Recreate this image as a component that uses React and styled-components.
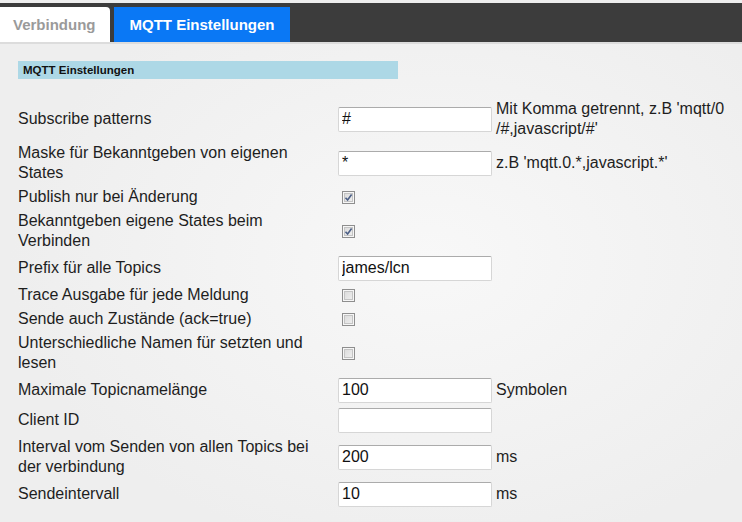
import React from 'react';
import styled, { createGlobalStyle } from 'styled-components';

const GlobalStyle = createGlobalStyle`
  html, body {
    margin: 0;
    padding: 0;
    background: #eeeeee;
  }
  body {
    font-family: 'Liberation Sans', Arial, sans-serif;
  }
`;

// Page shell
const Page = styled.div`
  min-height: 100vh;
  padding-top: 3px;
  box-sizing: border-box;
  background: #eeeeee;
`;

const TabBar = styled.div`
  display: flex;
  gap: 4px;
  padding-top: 4px;
  background: #3c3c3c;
  border-bottom: 2px solid #dcdcdc;
`;

const Tab = styled.div`
  height: 35px;
  display: flex;
  align-items: center;
  padding: ${({ $active }) => ($active ? '0 15px 0 16px' : '0 14px 0 13px')};
  background: ${({ $active }) => ($active ? '#0a78f5' : '#ffffff')};
  color: ${({ $active }) => ($active ? '#ffffff' : '#9a9a9a')};
  font-size: 15px;
  font-weight: bold;
  border-top-right-radius: ${({ $active }) => ($active ? '0' : '4px')};
`;

const Content = styled.div`
  padding: 17px 0 12px 18px;
  background: radial-gradient(ellipse 420px 300px at 58% 45%, #f8f8f8 0%, #eeeeee 100%);
  min-height: calc(100vh - 47px);
  box-sizing: border-box;
`;

const SectionHeader = styled.div`
  width: 375px;
  height: 18px;
  line-height: 18px;
  padding-left: 5px;
  background: #add8e6;
  color: #111;
  font-size: 11.5px;
  font-weight: bold;
  margin-bottom: 18px;
`;

// Form rows
const Row = styled.div`
  display: grid;
  grid-template-columns: 320px 158px 1fr;
  align-items: center;
  padding: 2px 0;
  font-size: 16px;
  line-height: 20px;
  color: #1e1e1e;
`;

const Label = styled.div`
  padding-right: 6px;
`;

const Field = styled.div`
  display: flex;
  align-items: center;
`;

const Input = styled.input`
  box-sizing: border-box;
  width: 154px;
  height: 25px;
  margin: 0.5px 0;
  padding: 0 3px;
  border: 1px solid #d6d6d6;
  border-top-color: #ababab;
  border-radius: 2px;
  background: #fff;
  font-family: 'Liberation Sans', Arial, sans-serif;
  font-size: 16px;
  color: #111;
  outline: none;
`;

const Hint = styled.div`
  color: #1e1e1e;
`;

const Box = styled.span`
  box-sizing: border-box;
  width: 13px;
  height: 13px;
  margin-left: 4px;
  border: 1px solid #8e8e8e;
  background: linear-gradient(135deg, #d8d8d8 0%, #f2f2f2 100%);
  box-shadow: inset 0 0 0 1px #f6f6f6, inset 0 0 0 2px #c4c4c4;
  display: inline-flex;
  align-items: center;
  justify-content: center;
`;

const Check = ({ checked }) => (
  <Box>
    {checked && (
      <svg width="9" height="9" viewBox="0 0 9 9">
        <path d="M1.5 4.8 L3.6 7 L7.6 1.6" fill="none" stroke="#4c5f86" strokeWidth="1.6" />
      </svg>
    )}
  </Box>
);

const rows = [
  { label: 'Subscribe patterns', input: '#', hint: <>Mit Komma getrennt, z.B 'mqtt/0<br />/#,javascript/#'</> },
  { label: 'Maske für Bekanntgeben von eigenen States', input: '*', hint: "z.B 'mqtt.0.*,javascript.*'" },
  { label: 'Publish nur bei Änderung', check: true },
  { label: 'Bekanntgeben eigene States beim Verbinden', check: true },
  { label: 'Prefix für alle Topics', input: 'james/lcn' },
  { label: 'Trace Ausgabe für jede Meldung', check: false },
  { label: 'Sende auch Zustände (ack=true)', check: false },
  { label: 'Unterschiedliche Namen für setzten und lesen', check: false },
  { label: 'Maximale Topicnamelänge', input: '100', hint: 'Symbolen' },
  { label: 'Client ID', input: '' },
  { label: 'Interval vom Senden von allen Topics bei der verbindung', input: '200', hint: 'ms' },
  { label: 'Sendeintervall', input: '10', hint: 'ms' },
];

export default function App() {
  return (
    <Page>
      <GlobalStyle />
      <TabBar>
        <Tab>Verbindung</Tab>
        <Tab $active>MQTT Einstellungen</Tab>
      </TabBar>
      <Content>
        <SectionHeader>MQTT Einstellungen</SectionHeader>
        {rows.map((r) => (
          <Row key={r.label}>
            <Label>{r.label}</Label>
            <Field>
              {'input' in r ? <Input defaultValue={r.input} /> : <Check checked={r.check} />}
            </Field>
            <Hint>{r.hint}</Hint>
          </Row>
        ))}
      </Content>
    </Page>
  );
}
